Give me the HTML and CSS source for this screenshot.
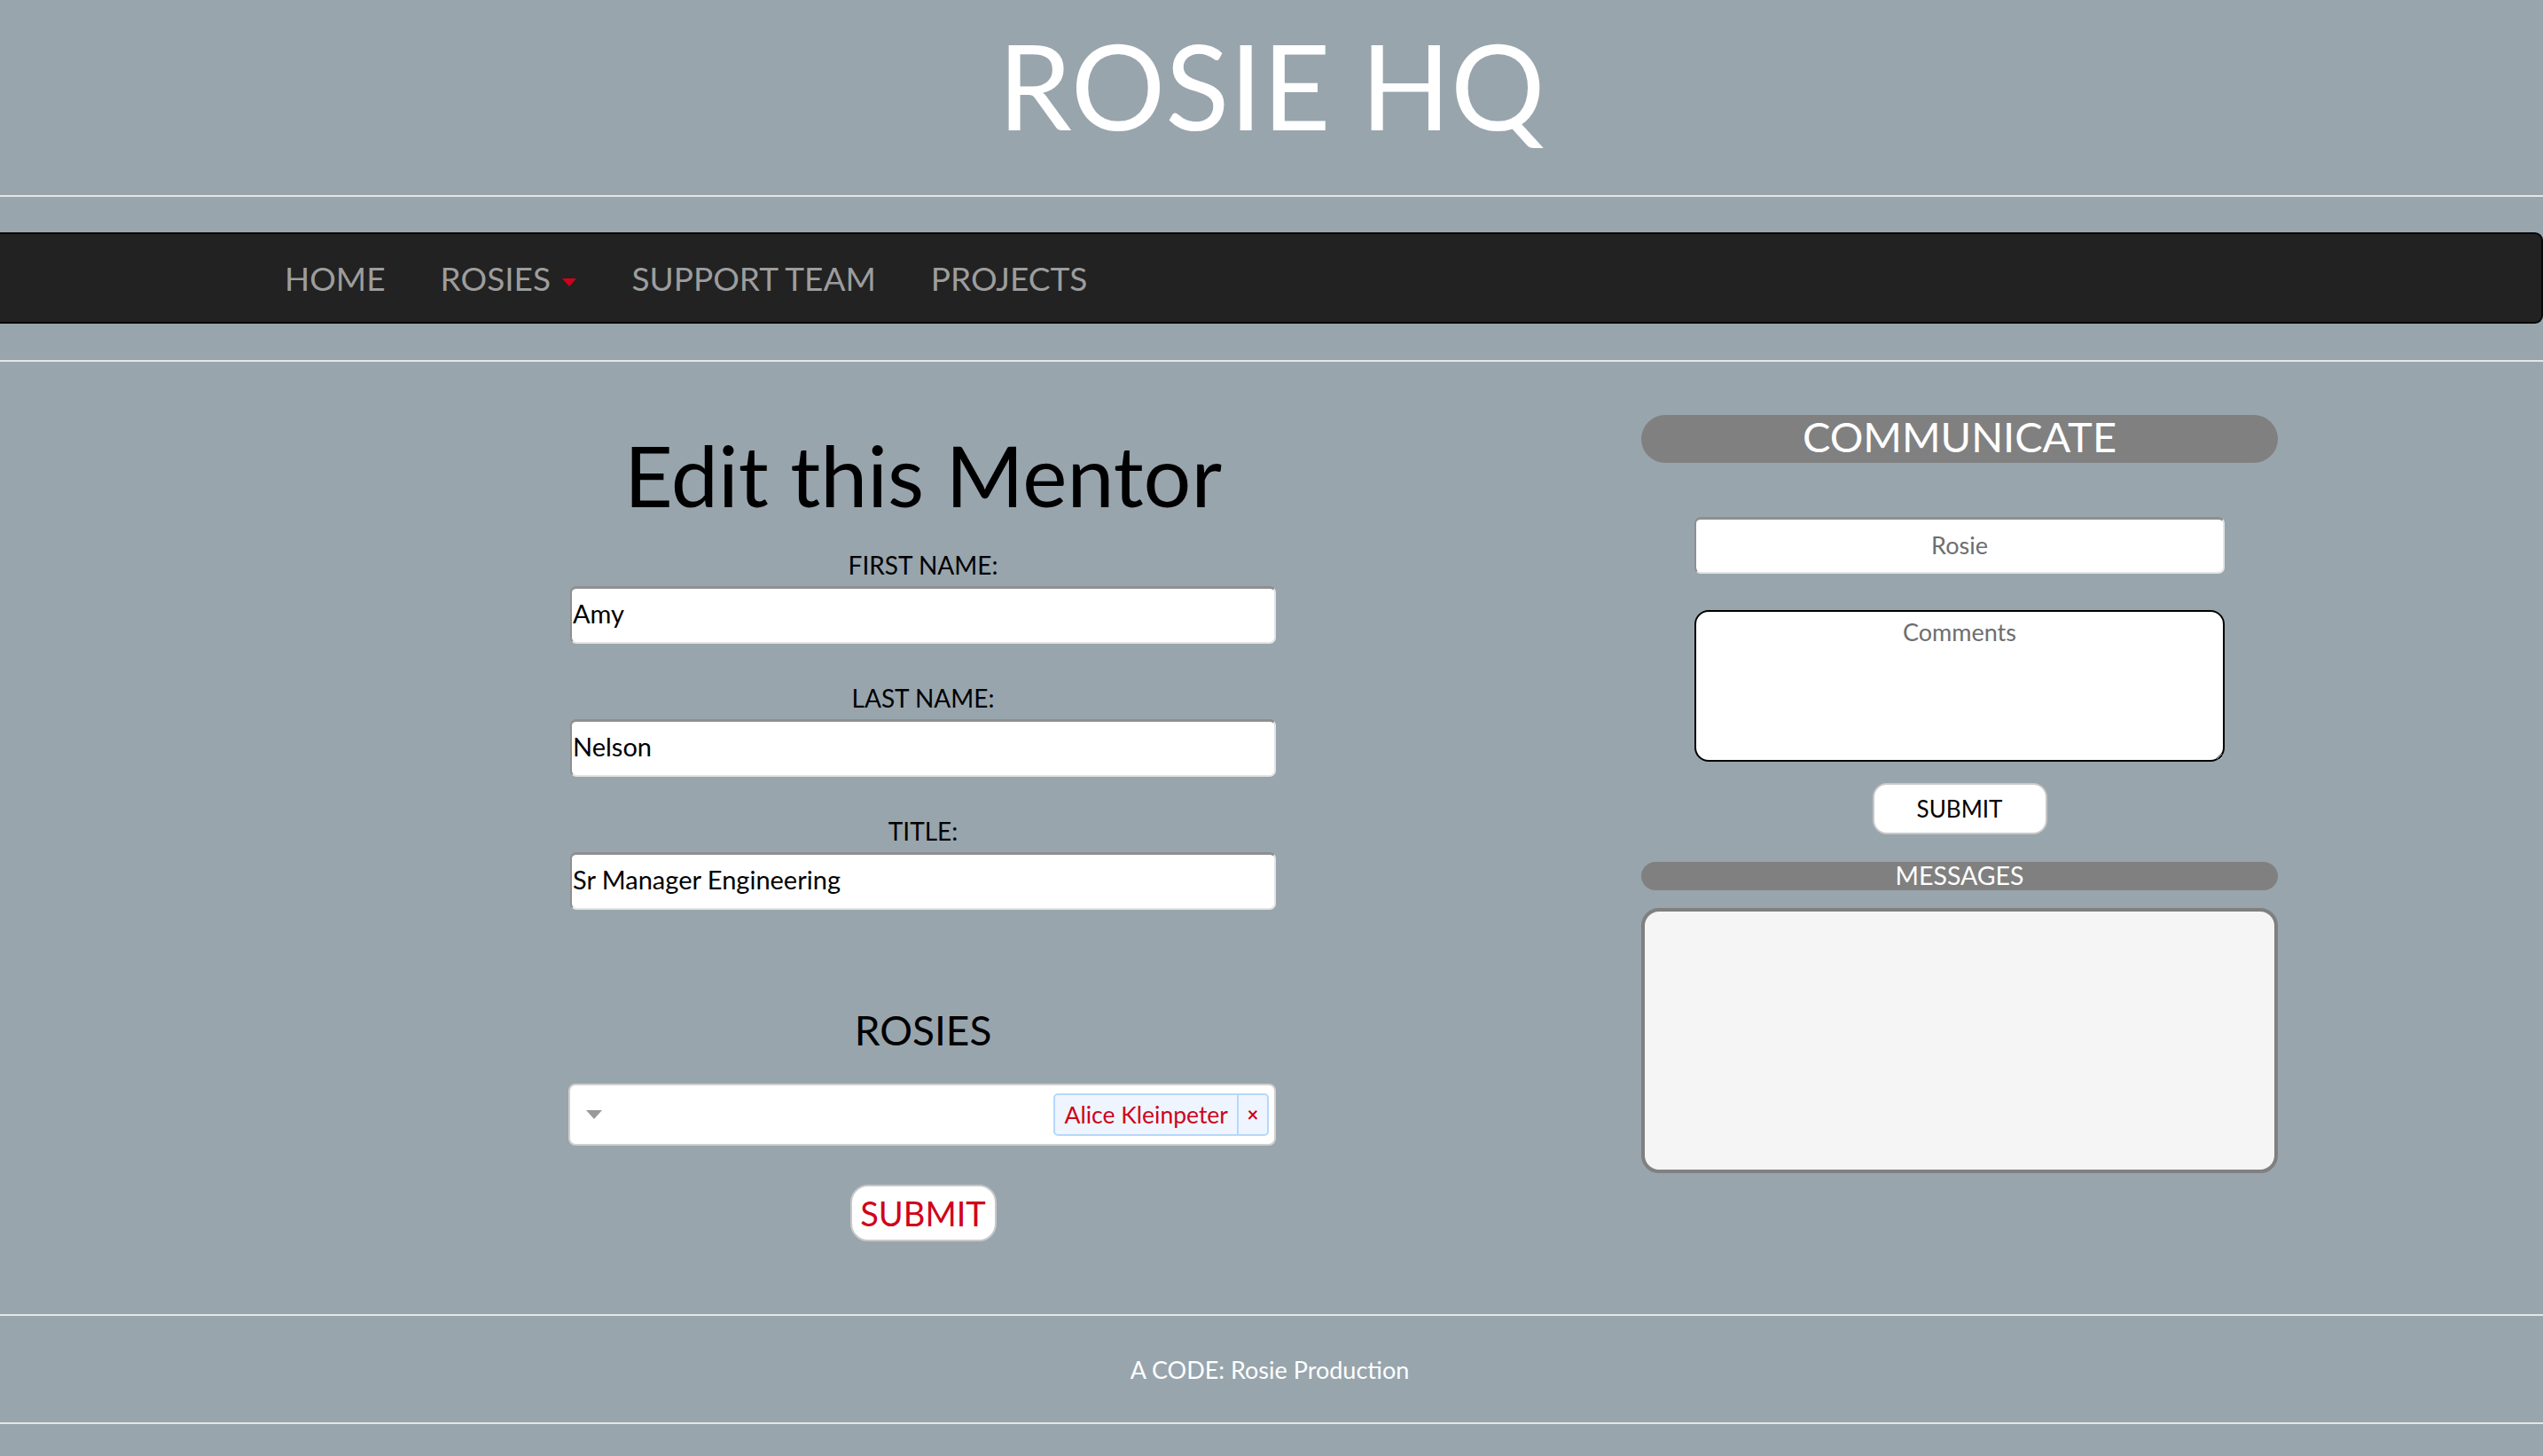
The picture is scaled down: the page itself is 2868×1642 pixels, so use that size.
FILE: index.html
```html
<!DOCTYPE html>
<html lang="en">
<head>
<meta charset="utf-8">
<title>Rosie HQ</title>
<link rel="stylesheet" href="styles.css">
</head>
<body>
<header class="site-header">
  <h1 class="site-title">ROSIE HQ</h1>
</header>
<hr class="rule">
<nav class="navbar">
  <ul class="nav-list">
    <li class="nav-item"><a href="#">HOME</a></li>
    <li class="nav-item"><a href="#">ROSIES <span class="caret"></span></a></li>
    <li class="nav-item"><a href="#">SUPPORT TEAM</a></li>
    <li class="nav-item"><a href="#">PROJECTS</a></li>
  </ul>
</nav>
<hr class="rule rule-below-nav">
<main class="main">
  <section class="edit-col">
    <h2 class="page-title">Edit this Mentor</h2>
    <form class="edit-form">
      <label class="field-label" for="first">FIRST NAME:</label>
      <input class="text-field" id="first" type="text" value="Amy">
      <label class="field-label" for="last">LAST NAME:</label>
      <input class="text-field" id="last" type="text" value="Nelson">
      <label class="field-label" for="title">TITLE:</label>
      <input class="text-field" id="title" type="text" value="Sr Manager Engineering">
      <h3 class="rosies-title">ROSIES</h3>
      <div class="multi-select">
        <span class="select-arrow"></span>
        <span class="tag"><span class="tag-name">Alice Kleinpeter</span><span class="tag-x">×</span></span>
      </div>
      <div class="submit-row"><button class="btn-submit" type="button">SUBMIT</button></div>
    </form>
  </section>
  <aside class="comm-col">
    <div class="pill-bar pill-large">COMMUNICATE</div>
    <input class="comm-name" type="text" placeholder="Rosie">
    <textarea class="comm-text" placeholder="Comments"></textarea>
    <div class="submit-row"><button class="btn-small" type="button">SUBMIT</button></div>
    <div class="pill-bar pill-small">MESSAGES</div>
    <div class="messages-box"></div>
  </aside>
</main>
<hr class="rule">
<footer class="site-footer">A CODE: Rosie Production</footer>
<hr class="rule">
</body>
</html>
```
FILE: styles.css
```css
html, body {
  margin: 0;
  padding: 0;
}
body {
  background: #98a5ad;
  font-family: Lato, "Open Sans", sans-serif;
  color: #000;
  min-height: 1642px;
}
.rule {
  border: 0;
  border-top: 2px solid #e6e6e6;
  margin: 0;
  height: 0;
}
.site-header {
  height: 220px;
  box-sizing: border-box;
  padding-top: 29px;
  text-align: center;
}
.site-title {
  margin: 0;
  font-size: 133px;
  line-height: 133px;
  font-weight: 400;
  color: #fff;
}
.navbar {
  margin-top: 40px;
  height: 103px;
  box-sizing: border-box;
  background: #222;
  border: 2px solid #080808;
  border-left: 0;
  border-radius: 0 9px 9px 0;
  display: flex;
  align-items: center;
}
.nav-list {
  list-style: none;
  margin: 0;
  padding: 0 0 0 290px;
  display: flex;
}
.nav-item a {
  display: block;
  padding: 0 31px;
  font-size: 37px;
  line-height: 50px;
  color: #9d9d9d;
  text-decoration: none;
}
.caret {
  display: inline-block;
  width: 0;
  height: 0;
  border-left: 8px solid transparent;
  border-right: 8px solid transparent;
  border-top: 9px solid #d0021b;
  vertical-align: middle;
  margin-left: 4px;
}
.rule-below-nav {
  margin-top: 41px;
}
.main {
  display: flex;
  align-items: flex-start;
  padding: 60px 0 82px 643px;
  gap: 412px;
}
.edit-col {
  width: 796px;
  text-align: center;
}
.page-title {
  margin: 17px 0 35px;
  font-size: 95px;
  line-height: 100px;
  font-weight: 400;
}
.edit-form {
  display: flex;
  flex-direction: column;
  align-items: stretch;
}
.field-label {
  display: block;
  font-size: 28px;
  line-height: 34px;
  margin-bottom: 7px;
}
.text-field {
  display: block;
  box-sizing: border-box;
  width: 796px;
  height: 65px;
  margin: 0 0 44px;
  padding: 0 0 5px 1px;
  border-style: solid;
  border-width: 3px 2px 2px 2px;
  border-color: #8f8f8f #e4e4e4 #e4e4e4 #8f8f8f;
  border-radius: 7px;
  background: #fff;
  font-family: Lato, "Open Sans", sans-serif;
  font-size: 29px;
  color: #000;
}
.text-field:last-of-type {
  margin-bottom: 0;
}
.rosies-title {
  margin: 111px 0 35px;
  font-size: 46px;
  line-height: 50px;
  font-weight: 400;
}
.multi-select {
  box-sizing: border-box;
  height: 70px;
  margin-left: -2px;
  background: #fff;
  border: 2px solid #cfcfcf;
  border-radius: 8px;
  display: flex;
  align-items: center;
  justify-content: space-between;
  padding: 0 6px 0 18px;
}
.select-arrow {
  width: 0;
  height: 0;
  border-left: 9px solid transparent;
  border-right: 9px solid transparent;
  border-top: 10px solid #999;
}
.tag {
  display: flex;
  height: 48px;
  box-sizing: border-box;
  background: #eef5ff;
  border: 2px solid #b6d8fa;
  border-radius: 5px;
  color: #d0021b;
  font-size: 26.5px;
  line-height: 44px;
}
.tag-name {
  padding: 0 10px 0 11px;
  border-right: 2px solid #b6d8fa;
}
.tag-x {
  width: 32px;
  text-align: center;
  font-size: 22px;
  font-weight: 700;
}
.submit-row {
  display: flex;
  justify-content: center;
}
.btn-submit {
  margin-top: 44px;
  width: 165px;
  height: 64px;
  background: #fff;
  border: 2px solid #c8c8c8;
  border-radius: 20px;
  color: #d0021b;
  font-family: Lato, "Open Sans", sans-serif;
  font-size: 38px;
  padding: 0;
}
.comm-col {
  width: 718px;
  display: flex;
  flex-direction: column;
}
.pill-bar {
  background: #808080;
  color: #fff;
  text-align: center;
  box-sizing: border-box;
}
.pill-large {
  height: 54px;
  border-radius: 27px;
  font-size: 47px;
  line-height: 48px;
}
.comm-name {
  display: block;
  box-sizing: border-box;
  margin: 61px 60px 0;
  width: 598px;
  height: 64px;
  border-style: solid;
  border-width: 3px 2px 2px 2px;
  border-color: #8f8f8f #e4e4e4 #e4e4e4 #8f8f8f;
  border-radius: 7px;
  background: #fff;
  text-align: center;
  font-family: Lato, "Open Sans", sans-serif;
  font-size: 27px;
  padding: 0 0 3px;
}
.comm-name::placeholder,
.comm-text::placeholder {
  color: #6e6e6e;
}
.comm-text {
  display: block;
  box-sizing: border-box;
  margin: 41px 60px 0;
  width: 598px;
  height: 171px;
  border: 2px solid #000;
  border-radius: 16px;
  background: #fff;
  text-align: center;
  font-family: Lato, "Open Sans", sans-serif;
  font-size: 27px;
  padding: 6px 4px;
}
.btn-small {
  margin-top: 24px;
  width: 197px;
  height: 58px;
  background: #fff;
  border: 2px solid #c8c8c8;
  border-radius: 16px;
  color: #000;
  font-family: Lato, "Open Sans", sans-serif;
  font-size: 26px;
  padding: 0;
}
.pill-small {
  margin-top: 31px;
  height: 32px;
  border-radius: 16px;
  font-size: 28.5px;
  line-height: 30px;
}
.messages-box {
  margin-top: 20px;
  height: 299px;
  box-sizing: border-box;
  border: 4px solid #808080;
  border-radius: 20px;
  background: #f5f5f5;
}
.site-footer {
  height: 120px;
  display: flex;
  align-items: center;
  justify-content: center;
  padding-right: 4px;
  color: #fff;
  font-size: 27px;
}
```
